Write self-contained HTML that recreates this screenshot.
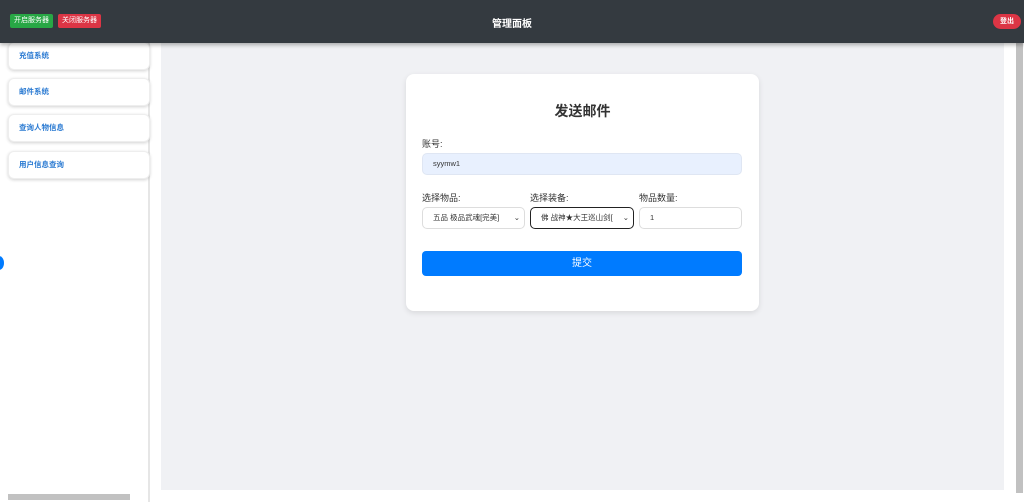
<!DOCTYPE html>
<html><head><meta charset="utf-8"><style>
*{box-sizing:border-box;margin:0;padding:0}
body{width:1024px;height:502px;overflow:hidden;background:#fff;font-family:"Liberation Sans","Noto Sans CJK SC",sans-serif;position:relative}
.hdr{position:absolute;left:0;top:0;width:1024px;height:43px;background:#343a40;box-shadow:0 2px 4px rgba(0,0,0,.3);z-index:2}
.b{position:absolute;top:14px;height:14px;font-size:7px;color:#fff;line-height:14px;padding:0 4px;border-radius:2px}
.ttl{position:absolute;left:0;width:1024px;top:15px;text-align:center;color:#fff;font-weight:bold;font-size:10px}
.side{position:absolute;left:0;top:43px;width:150px;height:459px;background:#fff;border-right:2px solid #e6e6e6}
.it{position:absolute;left:8px;width:142px;height:28px;border-radius:6px;box-shadow:0 1px 3px rgba(0,0,0,.18);border:1px solid #eee;background:#fff;color:#2a7ad2;font-weight:bold;font-size:7.5px;line-height:26px;padding-left:10px}
.main{position:absolute;left:161px;top:43px;width:843px;height:447px;background:#f0f1f4}
.card{position:absolute;left:406px;top:74px;width:353px;height:237px;background:#fff;border-radius:8px;box-shadow:0 2px 6px rgba(0,0,0,.1)}
.lab{position:absolute;font-size:9px;color:#333}
.f{position:absolute;height:22px;border:1px solid #ddd;border-radius:5px;font-size:7.5px;color:#333;line-height:20px;padding-left:10px;background:#fff}
</style></head><body>
<div class="hdr">
<div class="b" style="left:10px;background:#28a745">开启服务器</div>
<div class="b" style="left:58px;background:#dc3545">关闭服务器</div>
<div class="ttl">管理面板</div>
<div class="b" style="left:993px;top:14px;width:28px;height:15px;line-height:15px;text-align:center;padding:0;background:#dc3545;border-radius:8px;font-weight:bold">登出</div>
</div>
<div class="side">
<div class="it" style="top:-1px">充值系统</div>
<div class="it" style="top:35px">邮件系统</div>
<div class="it" style="top:71px">查询人物信息</div>
<div class="it" style="top:108px">用户信息查询</div>
<div style="position:absolute;left:-6px;top:213px;width:10px;height:14px;border-radius:50%;background:#007bff"></div>
<div style="position:absolute;left:8px;top:451px;width:122px;height:6px;background:#c1c1c1"></div>
</div>
<div class="main"></div>
<div style="position:absolute;left:1016px;top:43px;width:7px;height:450px;background:#c1c1c1"></div>
<div class="card"></div>
<div style="position:absolute;left:406px;top:101px;width:353px;text-align:center;font-size:14px;font-weight:bold;color:#333">发送邮件</div>
<div class="lab" style="left:422px;top:137px">账号:</div>
<div class="f" style="left:422px;top:153px;width:320px;background:#e8f0fe;border-color:#dfe6f3">syymw1</div>
<div class="lab" style="left:422px;top:191px">选择物品:</div>
<div class="lab" style="left:530px;top:191px">选择装备:</div>
<div class="lab" style="left:639px;top:191px">物品数量:</div>
<div class="f" style="left:422px;top:207px;width:103px">五品 极品武魂[完美]<span style="position:absolute;right:4px">⌄</span></div>
<div class="f" style="left:530px;top:207px;width:104px;border:1.5px solid #222">佛 战神★大王巡山剑[<span style="position:absolute;right:4px">⌄</span></div>
<div class="f" style="left:639px;top:207px;width:103px">1</div>
<div style="position:absolute;left:422px;top:251px;width:320px;height:25px;background:#007bff;border-radius:4px;color:#fff;font-size:10px;text-align:center;line-height:25px">提交</div>
</body></html>
